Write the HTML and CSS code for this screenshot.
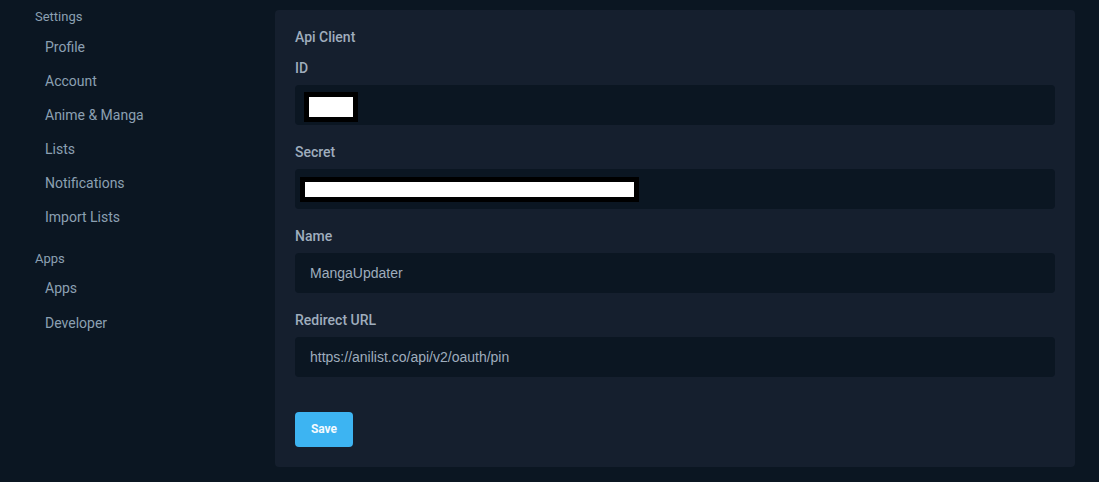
FILE: index.html
```html
<!DOCTYPE html>
<html>
<head>
<meta charset="utf-8">
<link rel="stylesheet" href="styles.css">
</head>
<body>
<div class="page">
  <nav class="sidebar">
    <div class="section-title">Settings</div>
    <div class="nav-list">
      <a class="nav-item">Profile</a>
      <a class="nav-item">Account</a>
      <a class="nav-item">Anime &amp; Manga</a>
      <a class="nav-item">Lists</a>
      <a class="nav-item">Notifications</a>
      <a class="nav-item">Import Lists</a>
    </div>
    <div class="section-title section-gap">Apps</div>
    <div class="nav-list nav-list-apps">
      <a class="nav-item">Apps</a>
      <a class="nav-item">Developer</a>
    </div>
  </nav>
  <main class="card">
    <div class="card-title">Api Client</div>
    <div class="field">
      <div class="label">ID</div>
      <div class="input"><span class="redact redact-id"></span></div>
    </div>
    <div class="field">
      <div class="label">Secret</div>
      <div class="input"><span class="redact redact-secret"></span></div>
    </div>
    <div class="field">
      <div class="label">Name</div>
      <div class="input">MangaUpdater</div>
    </div>
    <div class="field">
      <div class="label">Redirect URL</div>
      <div class="input">https://anilist.co/api/v2/oauth/pin</div>
    </div>
    <button class="save">Save</button>
  </main>
</div>
</body>
</html>
```

FILE: styles.css
```css
html, body {
  margin: 0;
  padding: 0;
  background: #0b1622;
  height: 100%;
  overflow: hidden;
}
body {
  font-family: Roboto, "Liberation Sans", sans-serif;
  color: #9fadbd;
}
.page {
  display: flex;
  align-items: flex-start;
}
.sidebar {
  width: 240px;
  padding: 7px 0 0 35px;
  display: flex;
  flex-direction: column;
}
.section-title {
  font-size: 13px;
  line-height: 20px;
  height: 20px;
  color: #8ba0b2;
}
.section-gap {
  margin-top: 15px;
}
.nav-list {
  display: flex;
  flex-direction: column;
  margin-top: 3px;
  padding-left: 10px;
}
.nav-list-apps {
  margin-top: 2px;
}
.nav-list-apps .nav-item {
  height: 35px;
}
.nav-item {
  font-size: 14px;
  height: 34px;
  line-height: 34px;
  color: #8ba0b2;
}
.card {
  margin-top: 10px;
  width: 760px;
  background: #151f2e;
  border-radius: 4px;
  padding: 19px 20px 20px;
  display: flex;
  flex-direction: column;
}
.card-title {
  font-size: 14px;
  font-weight: 500;
  line-height: 16px;
  margin-bottom: 15px;
}
.field {
  display: flex;
  flex-direction: column;
  margin-bottom: 19px;
}
.field:last-of-type {
  margin-bottom: 35px;
}
.label {
  font-size: 14px;
  font-weight: 500;
  line-height: 16px;
  margin-bottom: 9px;
}
.input {
  height: 40px;
  box-sizing: border-box;
  background: #0b1622;
  border-radius: 4px;
  padding: 0 15px;
  font-family: "Liberation Sans", Arial, sans-serif;
  font-size: 14px;
  line-height: 40px;
  color: #9fadbd;
  position: relative;
}
.redact {
  position: absolute;
  background: #fff;
  border: 5px solid #000;
}
.redact-id {
  left: 9px;
  top: 7px;
  width: 44px;
  height: 20px;
}
.redact-secret {
  left: 5px;
  top: 8px;
  width: 329px;
  height: 15px;
}
.save {
  align-self: flex-start;
  width: 58px;
  height: 35px;
  border: none;
  border-radius: 4px;
  background: #3db4f2;
  color: #f4fafe;
  font-family: Roboto, "Liberation Sans", sans-serif;
  font-size: 12px;
  font-weight: 700;
  padding: 0 0 2px;
}
```
